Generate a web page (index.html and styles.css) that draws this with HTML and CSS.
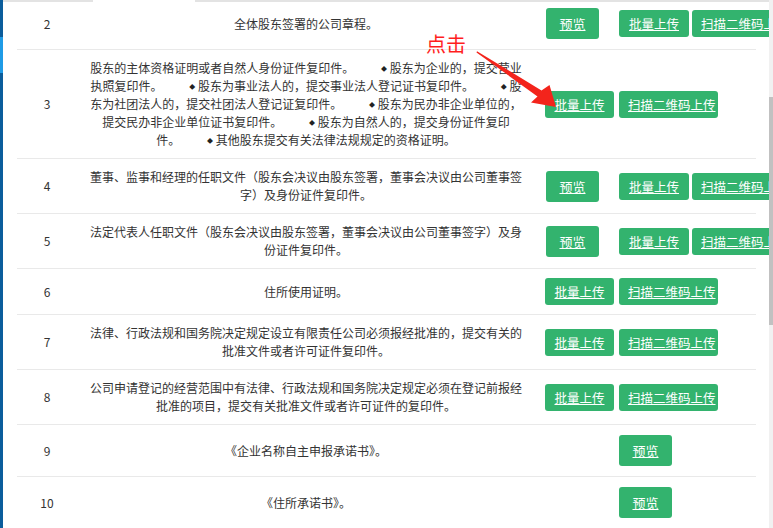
FILE: index.html
```html
<!DOCTYPE html>
<html lang="zh-CN">

<head>
    <meta charset="UTF-8">
    <title>申请材料清单</title>
    <link rel="stylesheet" href="styles.css">
</head>

<body>
    <div class="layout">
        <div class="side">
            <div class="side-active"></div>
        </div>

        <div class="main">
            <div class="top-line">
                <span class="seg seg-left"></span>
                <span class="seg seg-gap"></span>
                <span class="seg seg-right"></span>
            </div>

            <table class="list">
                <colgroup>
                    <col class="col-num">
                    <col class="col-desc">
                    <col class="col-ops">
                </colgroup>
                <tr>
                    <td class="num">2</td>
                    <td class="desc">全体股东签署的公司章程。</td>
                    <td class="ops">
                        <div class="actions has-preview">
                            <a class="btn btn-preview">预览</a>
                            <a class="btn btn-batch">批量上传</a>
                            <a class="btn btn-scan">扫描二维码上传</a>
                        </div>
                    </td>
                </tr>
                <tr>
                    <td class="num">3</td>
                    <td class="desc">股东的主体资格证明或者自然人身份证件复印件。&nbsp;<span class="dot">◆</span> 股东为企业的，提交营业执照复印件。&nbsp;<span class="dot">◆</span> 股东为事业法人的，提交事业法人登记证书复印件。&nbsp;<span class="dot">◆</span> 股东为社团法人的，提交社团法人登记证复印件。&nbsp;<span class="dot">◆</span> 股东为民办非企业单位的，提交民办非企业单位证书复印件。&nbsp;<span class="dot">◆</span> 股东为自然人的，提交身份证件复印件。&nbsp;<span class="dot">◆</span> 其他股东提交有关法律法规规定的资格证明。</td>
                    <td class="ops">
                        <div class="actions">
                            <a class="btn btn-batch">批量上传</a>
                            <a class="btn btn-scan">扫描二维码上传</a>
                        </div>
                    </td>
                </tr>
                <tr>
                    <td class="num">4</td>
                    <td class="desc">董事、监事和经理的任职文件（股东会决议由股东签署，董事会决议由公司董事签字）及身份证件复印件。</td>
                    <td class="ops">
                        <div class="actions has-preview">
                            <a class="btn btn-preview">预览</a>
                            <a class="btn btn-batch">批量上传</a>
                            <a class="btn btn-scan">扫描二维码上传</a>
                        </div>
                    </td>
                </tr>
                <tr>
                    <td class="num">5</td>
                    <td class="desc">法定代表人任职文件（股东会决议由股东签署，董事会决议由公司董事签字）及身份证件复印件。</td>
                    <td class="ops">
                        <div class="actions has-preview">
                            <a class="btn btn-preview">预览</a>
                            <a class="btn btn-batch">批量上传</a>
                            <a class="btn btn-scan">扫描二维码上传</a>
                        </div>
                    </td>
                </tr>
                <tr>
                    <td class="num">6</td>
                    <td class="desc">住所使用证明。</td>
                    <td class="ops">
                        <div class="actions">
                            <a class="btn btn-batch">批量上传</a>
                            <a class="btn btn-scan">扫描二维码上传</a>
                        </div>
                    </td>
                </tr>
                <tr>
                    <td class="num">7</td>
                    <td class="desc">法律、行政法规和国务院决定规定设立有限责任公司必须报经批准的，提交有关的批准文件或者许可证件复印件。</td>
                    <td class="ops">
                        <div class="actions">
                            <a class="btn btn-batch">批量上传</a>
                            <a class="btn btn-scan">扫描二维码上传</a>
                        </div>
                    </td>
                </tr>
                <tr>
                    <td class="num">8</td>
                    <td class="desc">公司申请登记的经营范围中有法律、行政法规和国务院决定规定必须在登记前报经批准的项目，提交有关批准文件或者许可证件的复印件。</td>
                    <td class="ops">
                        <div class="actions">
                            <a class="btn btn-batch">批量上传</a>
                            <a class="btn btn-scan">扫描二维码上传</a>
                        </div>
                    </td>
                </tr>
                <tr>
                    <td class="num">9</td>
                    <td class="desc">《企业名称自主申报承诺书》。</td>
                    <td class="ops">
                        <div class="actions">
                            <a class="btn btn-preview only">预览</a>
                        </div>
                    </td>
                </tr>
                <tr>
                    <td class="num">10</td>
                    <td class="desc">《住所承诺书》。</td>
                    <td class="ops">
                        <div class="actions">
                            <a class="btn btn-preview only">预览</a>
                        </div>
                    </td>
                </tr>
            </table>
        </div>

        <div class="scrollbar">
            <div class="thumb"></div>
        </div>

        <!-- 标注：点击 + 箭头 -->
        <div class="tip">点击</div>
        <svg class="arrow" width="773" height="528" viewBox="0 0 773 528">
            <polygon points="477,51.2 541.5,90.5 549.5,85 556,107 531,102.5 537.5,96.5 476.5,52.4" fill="#f3241c"/>
        </svg>
    </div>
</body>

</html>
```

FILE: styles.css
```css
body {
    margin: 0;
    padding: 0;
    background-color: #fff;
    font-family: "Microsoft YaHei", "Noto Sans CJK SC", sans-serif;
    overflow: hidden;
}

.layout {
    display: flex;
    height: 528px;
    position: relative;
}

.side {
    width: 3px;
    flex-shrink: 0;
    background-color: #0b5d9c;
}

.side-active {
    margin-top: 37px;
    height: 36px;
    background-color: #1f9be6;
}

.main {
    flex: 1;
    overflow: hidden;
    min-width: 0;
}

.top-line {
    display: flex;
    height: 2px;
    position: relative;
    z-index: 1;
}

.seg-left {
    width: 90px;
    background-color: #e3e3e3;
}

.seg-gap {
    width: 102px;
    background-color: #fff;
}

.seg-right {
    flex: 1;
    background-color: #e3e3e3;
}

.list {
    margin: -4px 0 0 14px;
    width: 739px;
    table-layout: fixed;
    border-collapse: collapse;
}

.col-num {
    width: 60px;
}

.col-desc {
    width: 458px;
}

.col-ops {
    width: 221px;
}

.list td {
    padding: 9px 10px;
    border-bottom: 1px solid #e9e9e9;
    vertical-align: middle;
    font-size: 12px;
    line-height: 18px;
    color: #333;
    text-align: center;
}

.list td.ops {
    text-align: left;
    padding-right: 0;
    overflow: visible;
}

.dot {
    font-size: 6px;
    line-height: 0;
    padding-left: 24px;
    color: #222;
    vertical-align: 2px;
}

.actions {
    display: flex;
    align-items: center;
    gap: 5px;
    white-space: nowrap;
}

.actions.has-preview {
    padding-left: 1px;
    gap: 3px;
}

.btn {
    display: block;
    flex-shrink: 0;
    box-sizing: border-box;
    height: 27px;
    line-height: 27px;
    background-color: #33b36e;
    color: #fff;
    font-size: 12.5px;
    text-decoration: underline;
    text-align: center;
    border-radius: 3px;
    cursor: pointer;
}

.btn-preview {
    width: 53px;
    height: 31px;
    line-height: 31px;
    margin: 1px 17px 1px 0;
    font-size: 13px;
}

.btn-preview.only {
    margin-left: 74px;
    margin-right: 0;
}

.btn-batch {
    width: 69px;
}

.has-preview .btn-batch {
    width: 70px;
}

.btn-scan {
    width: 99px;
    padding-left: 9px;
    text-align: left;
}

.scrollbar {
    width: 4px;
    flex-shrink: 0;
    background-color: #f1f1f1;
}

.thumb {
    margin-top: 97px;
    height: 228px;
    background-color: #c1c1c1;
}

.tip {
    position: absolute;
    left: 426px;
    top: 33px;
    font-size: 20px;
    line-height: 22px;
    color: #ff1e1e;
}

.arrow {
    position: absolute;
    left: 0;
    top: 0;
    pointer-events: none;
}
```
